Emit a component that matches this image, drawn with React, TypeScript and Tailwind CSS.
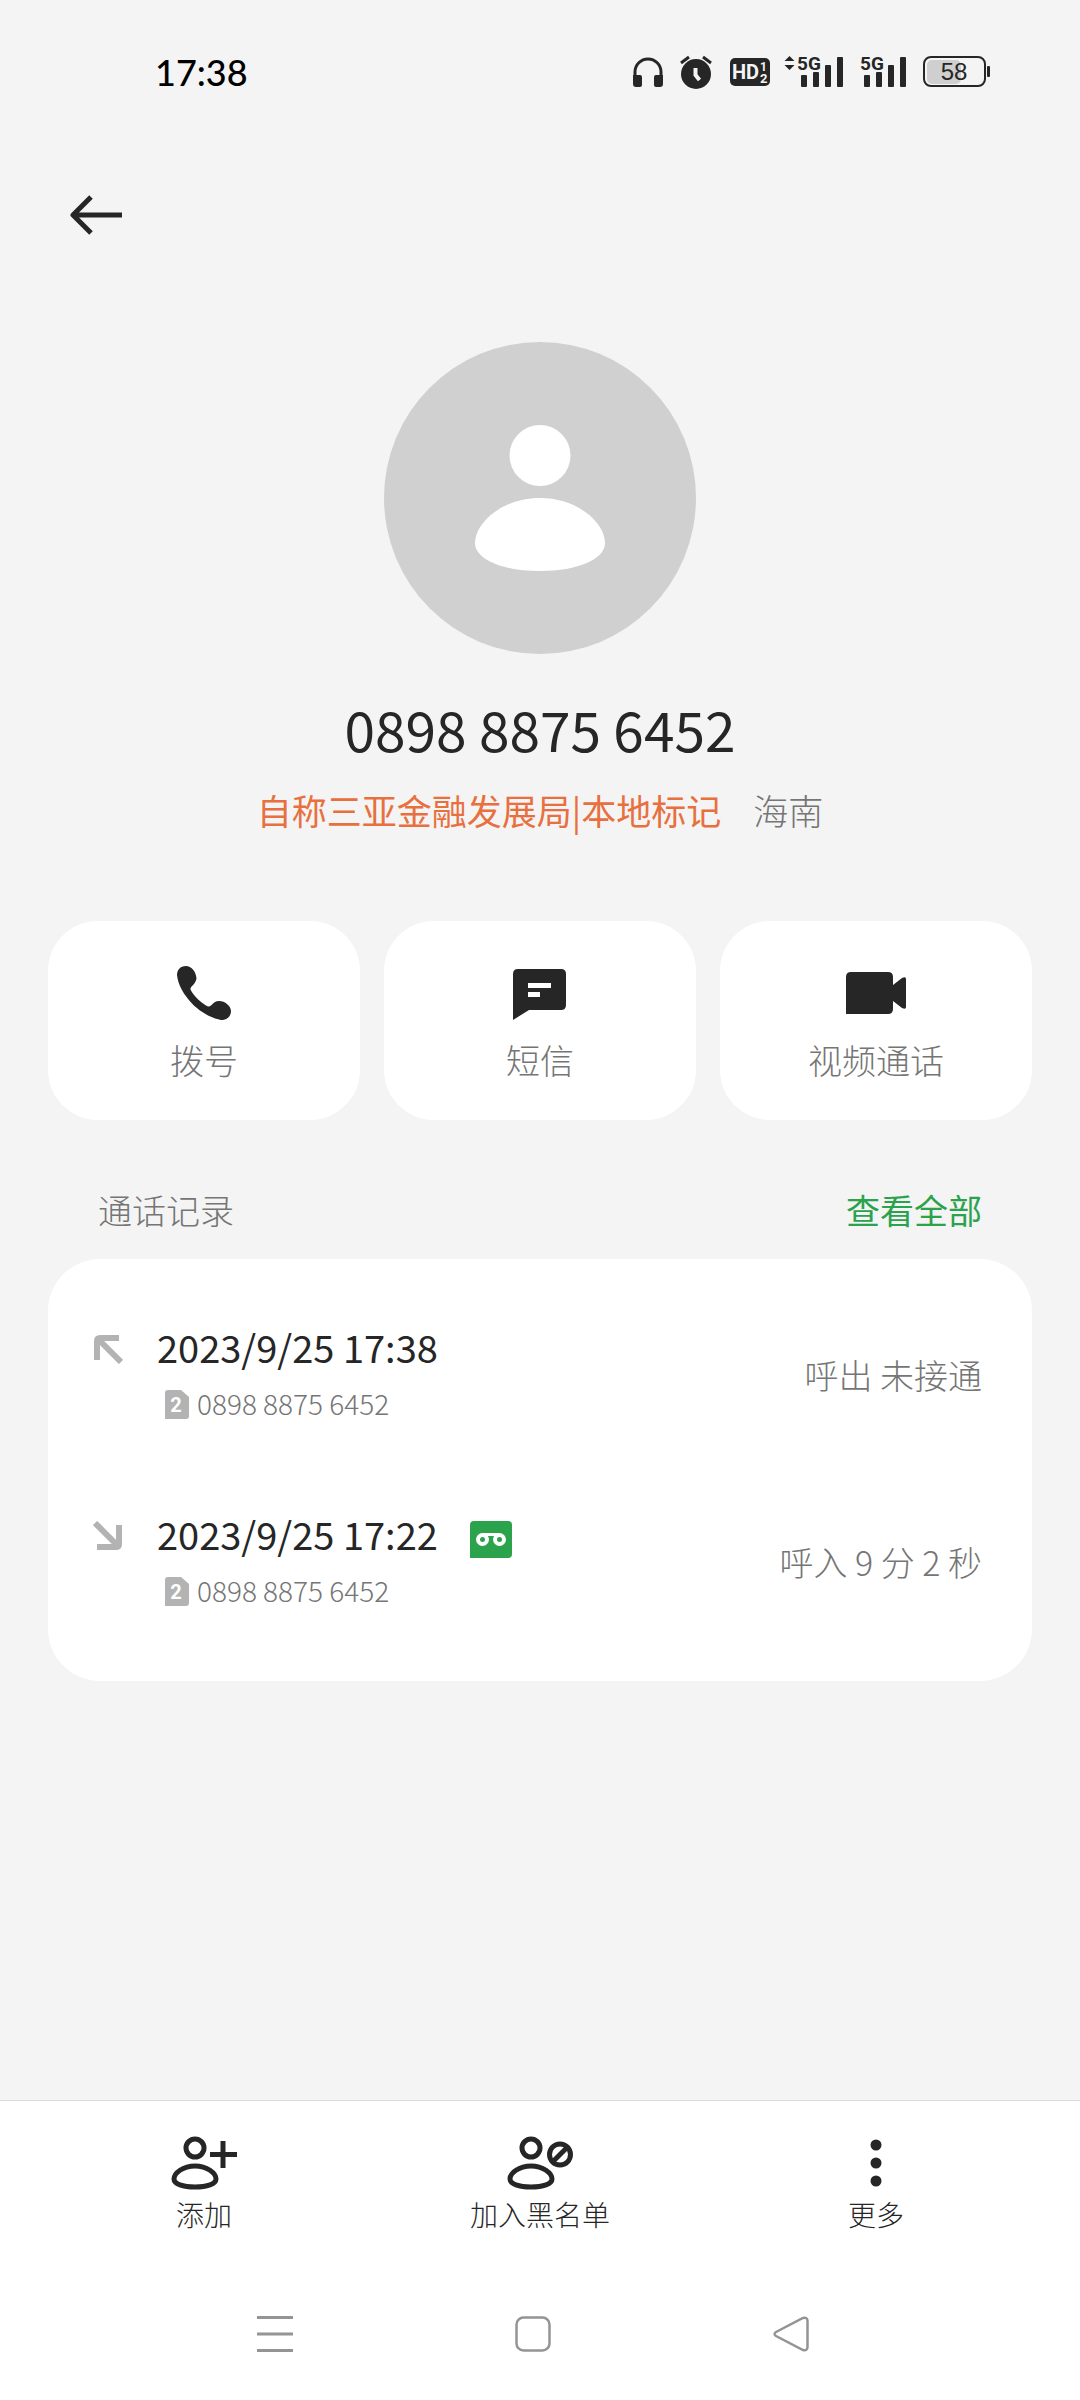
import type { ReactNode } from "react";

type CallRecord = {
  id: number;
  direction: "in" | "out";
  date: string;
  number: string;
  sim: number;
  result: string;
  recorded: boolean;
};

const records: CallRecord[] = [
  {
    id: 1,
    direction: "out",
    date: "2023/9/25 17:38",
    number: "0898 8875 6452",
    sim: 2,
    result: "呼出 未接通",
    recorded: false,
  },
  {
    id: 2,
    direction: "in",
    date: "2023/9/25 17:22",
    number: "0898 8875 6452",
    sim: 2,
    result: "呼入 9 分 2 秒",
    recorded: true,
  },
];

function SignalBars() {
  return (
    <>
      <text
        x="13"
        y="15"
        fontSize="19"
        fontWeight="700"
        className="font-['Roboto',sans-serif]"
      >
        5G
      </text>
      <rect x="17" y="20" width="6" height="12" rx="1" />
      <rect x="29" y="17" width="6" height="15" rx="1" />
      <rect x="41" y="10" width="6" height="22" rx="1" />
      <rect x="53" y="2" width="6" height="30" rx="1" />
    </>
  );
}

function StatusBar() {
  return (
    <div className="flex h-36 items-center justify-between pr-[90px] pl-[155px]">
      <span className="font-['Lato',sans-serif] text-4xl font-medium text-black">
        17:38
      </span>
      <div className="flex items-center text-[#262626]">
        <svg width="30" height="32" viewBox="0 0 30 32" fill="currentColor">
          <path
            d="M2 22v-6a13 13 0 0 1 26 0v6"
            fill="none"
            stroke="currentColor"
            strokeWidth="3"
          />
          <path d="M0 19h7q2 0 2 2v8q0 2-2 2H3q-3 0-3-3zM30 19h-7q-2 0-2 2v8q0 2 2 2h4q3 0 3-3z" />
        </svg>
        <svg
          className="ml-[17px]"
          width="32"
          height="34"
          viewBox="0 0 32 34"
          fill="currentColor"
        >
          <circle cx="16" cy="19" r="15" />
          <path
            d="M1 8l8-6M31 8l-8-6"
            stroke="currentColor"
            strokeWidth="3"
          />
          <path
            d="M15.500 13v7l4 5"
            stroke="#f4f4f4"
            strokeWidth="4"
            fill="none"
          />
        </svg>
        <svg
          className="ml-[18px]"
          width="40"
          height="28"
          viewBox="0 0 40 28"
          fill="currentColor"
        >
          <rect width="40" height="28" rx="5" />
          <g
            fill="#f4f4f4"
            fontWeight="700"
            className="font-['Roboto',sans-serif]"
          >
            <text x="2" y="21" fontSize="20">
              HD
            </text>
            <text x="30" y="13" fontSize="12">
              1
            </text>
            <text x="30" y="25" fontSize="13">
              2
            </text>
          </g>
        </svg>
        <svg
          className="ml-[14px]"
          width="60"
          height="42"
          viewBox="0 -4 60 42"
          fill="currentColor"
        >
          <path d="M5.500 1l5 5h-10zM5.500 15l5-5h-10z" />
          <SignalBars />
        </svg>
        <svg
          className="ml-[14px]"
          width="49"
          height="42"
          viewBox="11 -4 49 42"
          fill="currentColor"
        >
          <SignalBars />
        </svg>
        <svg className="ml-[16px]" width="67" height="32" viewBox="0 0 67 32">
          <rect x="4" y="4" width="34" height="24" rx="5" fill="#cfcfcf" />
          <rect
            x="1"
            y="1"
            width="61"
            height="29"
            rx="7"
            fill="none"
            stroke="currentColor"
            strokeWidth="2"
          />
          <rect x="64" y="10" width="3" height="11" rx="1" fill="currentColor" />
          <text
            x="31"
            y="24"
            fontSize="24"
            fontWeight="400"
            textAnchor="middle"
            fill="currentColor"
            className="font-['Liberation_Sans',sans-serif]"
          >
            58
          </text>
        </svg>
      </div>
    </div>
  );
}

function PhoneIcon() {
  return (
    <svg width="54" height="54" viewBox="0 0 54 54" fill="currentColor">
      <path d="M9 0C3 0 0 4 0 9c1 10 7 20 15 28.500S34 52 44 54c5 .500 10-3 10-9 0-5-6-10-12-10-7 .500-7 6-11 5.500C25 38 16 29 13.500 23.500c-.500-3.500 5-4.500 6-11C19 5 14 0 9 0z" />
    </svg>
  );
}

function MessageIcon() {
  return (
    <svg width="54" height="54" viewBox="0 0 54 54" fill="currentColor">
      <path d="M5 3h43q5 0 5 5v31q0 5-5 5H16L0 54V8q0-5 5-5z" />
      <path d="M15 17h23v5H15zM15 31h12v-5H15z" fill="#fff" />
    </svg>
  );
}

function VideoIcon() {
  return (
    <svg width="60" height="54" viewBox="0 0 60 54" fill="currentColor">
      <path d="M5 6h37q5 0 5 5v8l9-7q4-2 4 1v28q0 3-4 1l-9-7v8q0 5-5 5H0V11q0-5 5-5z" />
    </svg>
  );
}

function PersonOutline() {
  return (
    <g fill="none" stroke="currentColor" strokeWidth="5">
      <circle cx="24" cy="12" r="9" />
      <path d="M24 30c12 0 21 7 21 13 0 5-9 8-21 8S3 48 3 43c0-6 9-13 21-13z" />
    </g>
  );
}

function AddPersonIcon() {
  return (
    <svg width="66" height="54" viewBox="0 0 66 54">
      <PersonOutline />
      <path d="M52 5v27M39 18.500h27" stroke="currentColor" strokeWidth="5" />
    </svg>
  );
}

function BlockPersonIcon() {
  return (
    <svg width="66" height="54" viewBox="0 0 66 54">
      <PersonOutline />
      <g fill="none" stroke="currentColor" strokeWidth="5">
        <circle cx="53" cy="18.500" r="10.500" />
        <path d="M46 25.500l14-14" />
      </g>
    </svg>
  );
}

function MoreIcon() {
  return (
    <svg width="66" height="54" viewBox="0 0 66 54" fill="currentColor">
      <circle cx="33" cy="9" r="5.500" />
      <circle cx="33" cy="27" r="5.500" />
      <circle cx="33" cy="45" r="5.500" />
    </svg>
  );
}

function DirectionIcon({ direction }: { direction: "in" | "out" }) {
  return (
    <svg
      className="text-[#b3b3b3]"
      width="30"
      height="30"
      viewBox="0 0 30 30"
      fill="none"
      stroke="currentColor"
      strokeWidth="6"
    >
      {direction === "out" ? (
        <>
          <path d="M26 4H7Q4 4 4 7v19" />
          <path d="M5 5l23 23" />
        </>
      ) : (
        <>
          <path d="M4 26h19q3 0 3-3V4" />
          <path d="M2 2l23 23" />
        </>
      )}
    </svg>
  );
}

function SimBadge({ sim }: { sim: number }) {
  return (
    <svg width="24" height="29" viewBox="0 0 24 29">
      <path
        d="M3 0h13l8 7v19q0 3-3 3H0V3q0-3 3-3z"
        fill="#b3b3b3"
      />
      <text
        x="11"
        y="22"
        fontSize="20"
        fontWeight="700"
        textAnchor="middle"
        fill="#fff"
        className="font-['Roboto',sans-serif]"
      >
        {sim}
      </text>
    </svg>
  );
}

function RecordingBadge() {
  return (
    <svg width="42" height="38" viewBox="0 0 42 38">
      <path d="M4 0h34q4 0 4 4v29q0 4-4 4H0V4q0-4 4-4z" fill="#2ba24c" />
      <g fill="none" stroke="#fff" strokeWidth="4">
        <circle cx="12.500" cy="18.500" r="4.500" />
        <circle cx="29.500" cy="18.500" r="4.500" />
        <path d="M12 13.500h18" strokeWidth="3" />
      </g>
    </svg>
  );
}

function ActionCard({ icon, label }: { icon: ReactNode; label: string }) {
  return (
    <button
      type="button"
      className="flex flex-1 flex-col items-center gap-[14px] rounded-[50px] bg-white pt-[45px] pb-[34px] text-[#262626]"
    >
      {icon}
      <span className="text-[34px] leading-[52px] text-[#757575]">{label}</span>
    </button>
  );
}

function BottomAction({ icon, label }: { icon: ReactNode; label: string }) {
  return (
    <button
      type="button"
      className="flex flex-1 flex-col items-center gap-1 text-[#262626]"
    >
      {icon}
      <span className="text-[28px] leading-10">{label}</span>
    </button>
  );
}

export default function App() {
  return (
    <div className="flex min-h-screen flex-col bg-[#f4f4f4] font-['Noto_Sans_CJK_SC',sans-serif] font-light">
      <StatusBar />

      <header className="flex px-[70px] pt-[51px]">
        <button type="button" aria-label="返回" className="text-[#262626]">
          <svg
            width="52"
            height="40"
            viewBox="0 0 52 40"
            fill="none"
            stroke="currentColor"
            strokeWidth="5"
            strokeLinejoin="round"
          >
            <path d="M52 20H4M21 2L3 20l18 18" />
          </svg>
        </button>
      </header>

      <section className="mt-[107px] flex flex-col items-center">
        <svg width="312" height="312" viewBox="0 0 312 312">
          <circle cx="156" cy="156" r="156" fill="#d0d0d0" />
          <circle cx="156" cy="113.500" r="30.500" fill="#fff" />
          <path
            d="M156 156c38 0 65 25 65 45 0 16-27 28-65 28s-65-12-65-28c0-20 27-45 65-45z"
            fill="#fff"
          />
        </svg>
        <h1 className="mt-9 text-[55px] leading-[76px] font-normal text-[#262626]">
          0898 8875 6452
        </h1>
        <p className="mt-[18px] flex gap-8 text-[35px] leading-[52px] text-[#757575]">
          <span className="font-normal text-[#e8703f]">
            自称三亚金融发展局|本地标记
          </span>
          <span>海南</span>
        </p>
      </section>

      <section className="mt-[85px] flex gap-6 px-12">
        <ActionCard icon={<PhoneIcon />} label="拨号" />
        <ActionCard icon={<MessageIcon />} label="短信" />
        <ActionCard icon={<VideoIcon />} label="视频通话" />
      </section>

      <section className="mt-16 px-12">
        <div className="flex items-center justify-between px-[50px] text-[34px] leading-[52px]">
          <h2 className="text-[#757575]">通话记录</h2>
          <a href="#all" className="font-normal text-[#2ba24c]">
            查看全部
          </a>
        </div>
        <ul className="mt-[23px] rounded-[52px] bg-white py-6">
          {records.map((record) => (
            <li
              key={record.id}
              className="flex h-[187px] items-center pr-[50px] pl-[45px]"
            >
              <div className="flex flex-1 flex-col gap-1">
                <div className="flex h-[52px] items-center">
                  <DirectionIcon direction={record.direction} />
                  <span className="ml-[34px] pb-1 text-[38px] leading-[48px] font-normal text-[#262626]">
                    {record.date}
                  </span>
                  {record.recorded && (
                    <span className="mt-2 ml-8">
                      <RecordingBadge />
                    </span>
                  )}
                </div>
                <div className="flex h-[52px] items-center gap-2 pl-[72px] text-[28px] text-[#757575]">
                  <SimBadge sim={record.sim} />
                  <span className="pb-1">{record.number}</span>
                </div>
              </div>
              <span className="pb-1 text-[34px] leading-[52px] text-[#757575]">
                {record.result}
              </span>
            </li>
          ))}
        </ul>
      </section>

      <footer className="mt-auto h-[300px] border-t border-[#dcdcdc] bg-white">
        <div className="flex px-9 pt-[35px]">
          <BottomAction icon={<AddPersonIcon />} label="添加" />
          <BottomAction icon={<BlockPersonIcon />} label="加入黑名单" />
          <BottomAction icon={<MoreIcon />} label="更多" />
        </div>
        <nav className="mt-[82px] flex pr-[160px] pl-[146px] text-[#949494]">
          <button type="button" aria-label="最近任务" className="flex flex-1 justify-center">
            <svg width="36" height="36" viewBox="0 0 36 36" fill="currentColor">
              <path d="M0 0h36v3H0zM0 16.500h36v3H0zM0 33h36v3H0z" />
            </svg>
          </button>
          <button type="button" aria-label="主屏幕" className="flex flex-1 justify-center">
            <svg
              width="36"
              height="36"
              viewBox="0 0 36 36"
              fill="none"
              stroke="currentColor"
              strokeWidth="2.500"
            >
              <rect x="1.500" y="1.500" width="33" height="33" rx="7" />
            </svg>
          </button>
          <button type="button" aria-label="返回上一页" className="flex flex-1 justify-center">
            <svg
              width="36"
              height="36"
              viewBox="0 0 36 36"
              fill="none"
              stroke="currentColor"
              strokeWidth="2.500"
            >
              <path d="M3 16L30 2q4.500-1 4.500 3v26q0 4-4.500 3L3 20q-3-2 0-4z" />
            </svg>
          </button>
        </nav>
      </footer>
    </div>
  );
}
